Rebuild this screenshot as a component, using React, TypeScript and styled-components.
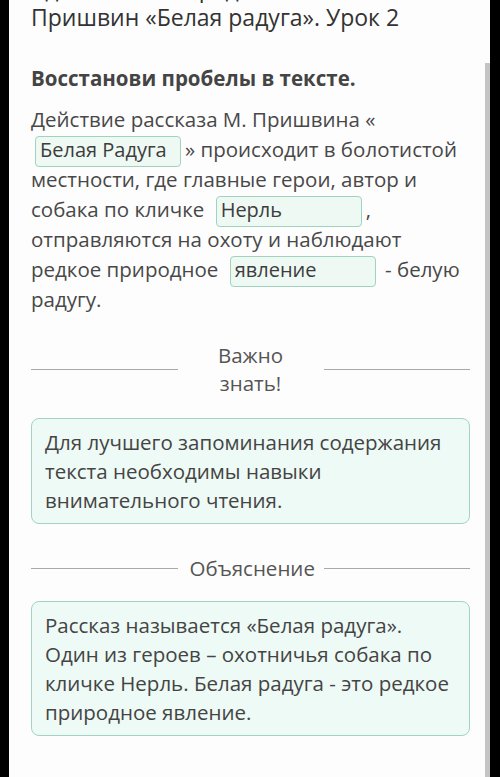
import React from 'react'
import styled, { createGlobalStyle } from 'styled-components'

const GlobalStyle = createGlobalStyle`
  html, body {
    margin: 0;
    padding: 0;
    background: #000;
  }
  body {
    font-family: 'Open Sans', 'Noto Sans', sans-serif;
    overflow: hidden;
  }
`

const Screen = styled.div`
  display: flex;
  width: 500px;
  height: 777px;
  padding: 0 10px 0 9px;
  box-sizing: border-box;
  background: #000;
  overflow: hidden;
`

const Page = styled.div`
  flex: 1;
  display: flex;
  background: #fdfdfd;
`

const Content = styled.div`
  flex: 1;
  padding: 0 15px 0 22px;
  color: #444;
`

const ScrollTrack = styled.div`
  width: 5px;
  padding-top: 63px;
  display: flex;
`

const ScrollThumb = styled.div`
  flex: 1;
  background: #c4c4c4;
`

const Title = styled.h1`
  margin: -26px 0 0;
  font-size: 23px;
  line-height: 29px;
  font-weight: 400;
  color: #333;
  white-space: nowrap;
`

const Task = styled.h2`
  margin: 33px 0 0;
  font-size: 20.5px;
  line-height: 26px;
  font-weight: 700;
  color: #444;
`

const Passage = styled.p`
  margin: 13px 0 0;
  font-size: 20.5px;
  line-height: 30px;
  color: #484848;
`

const Blank = styled.span<{ $indent?: number }>`
  display: inline-block;
  box-sizing: border-box;
  width: 146px;
  height: 31px;
  margin: -4px 4px -4px ${(p) => p.$indent ?? 6}px;
  padding: 0 4px;
  border: 1px solid #9fd3bf;
  border-radius: 4px;
  background: #eef9f4;
  color: #3d3d3d;
  font-size: 20px;
  line-height: 26px;
  vertical-align: middle;
`

const Divider = styled.div<{ $top: number }>`
  display: grid;
  grid-template-columns: 1fr 146px 1fr;
  align-items: center;
  margin-top: ${(p) => p.$top}px;
  color: #555;
  font-size: 20.5px;
  line-height: 28px;
`

const Rule = styled.div`
  height: 1px;
  background: #a9a9a9;
`

const DividerLabel = styled.div`
  padding: 0 12px;
  text-align: center;
`

const InfoCard = styled.div<{ $top: number }>`
  margin-top: ${(p) => p.$top}px;
  padding: 9px 13px 8px;
  border: 1px solid #a3d4c2;
  border-radius: 8px;
  background: #eefaf5;
  color: #444;
  font-size: 20.5px;
  line-height: 29px;
`

export default function App() {
  return (
    <>
      <GlobalStyle />
      <Screen>
        <Page>
          <Content>
            <Title>
              Удивительное рядом. Михаил
              <br />
              Пришвин «Белая радуга». Урок 2
            </Title>
            <Task>Восстанови пробелы в тексте.</Task>
            <Passage>
              Действие рассказа М. Пришвина «
              <br />
              <Blank $indent={4}>Белая Радуга</Blank>» происходит в болотистой местности, где главные
              герои, автор и собака по кличке <Blank>Нерль</Blank>, отправляются на охоту и наблюдают
              редкое природное <Blank>явление</Blank> - белую радугу.
            </Passage>
            <Divider $top={27}>
              <Rule />
              <DividerLabel>Важно знать!</DividerLabel>
              <Rule />
            </Divider>
            <InfoCard $top={21}>
              Для лучшего запоминания содержания текста необходимы навыки внимательного чтения.
            </InfoCard>
            <Divider $top={30}>
              <Rule />
              <DividerLabel>Объяснение</DividerLabel>
              <Rule />
            </Divider>
            <InfoCard $top={19}>
              Рассказ называется «Белая радуга». Один из героев – охотничья собака по кличке Нерль.
              Белая радуга - это редкое природное явление.
            </InfoCard>
          </Content>
          <ScrollTrack>
            <ScrollThumb />
          </ScrollTrack>
        </Page>
      </Screen>
    </>
  )
}
